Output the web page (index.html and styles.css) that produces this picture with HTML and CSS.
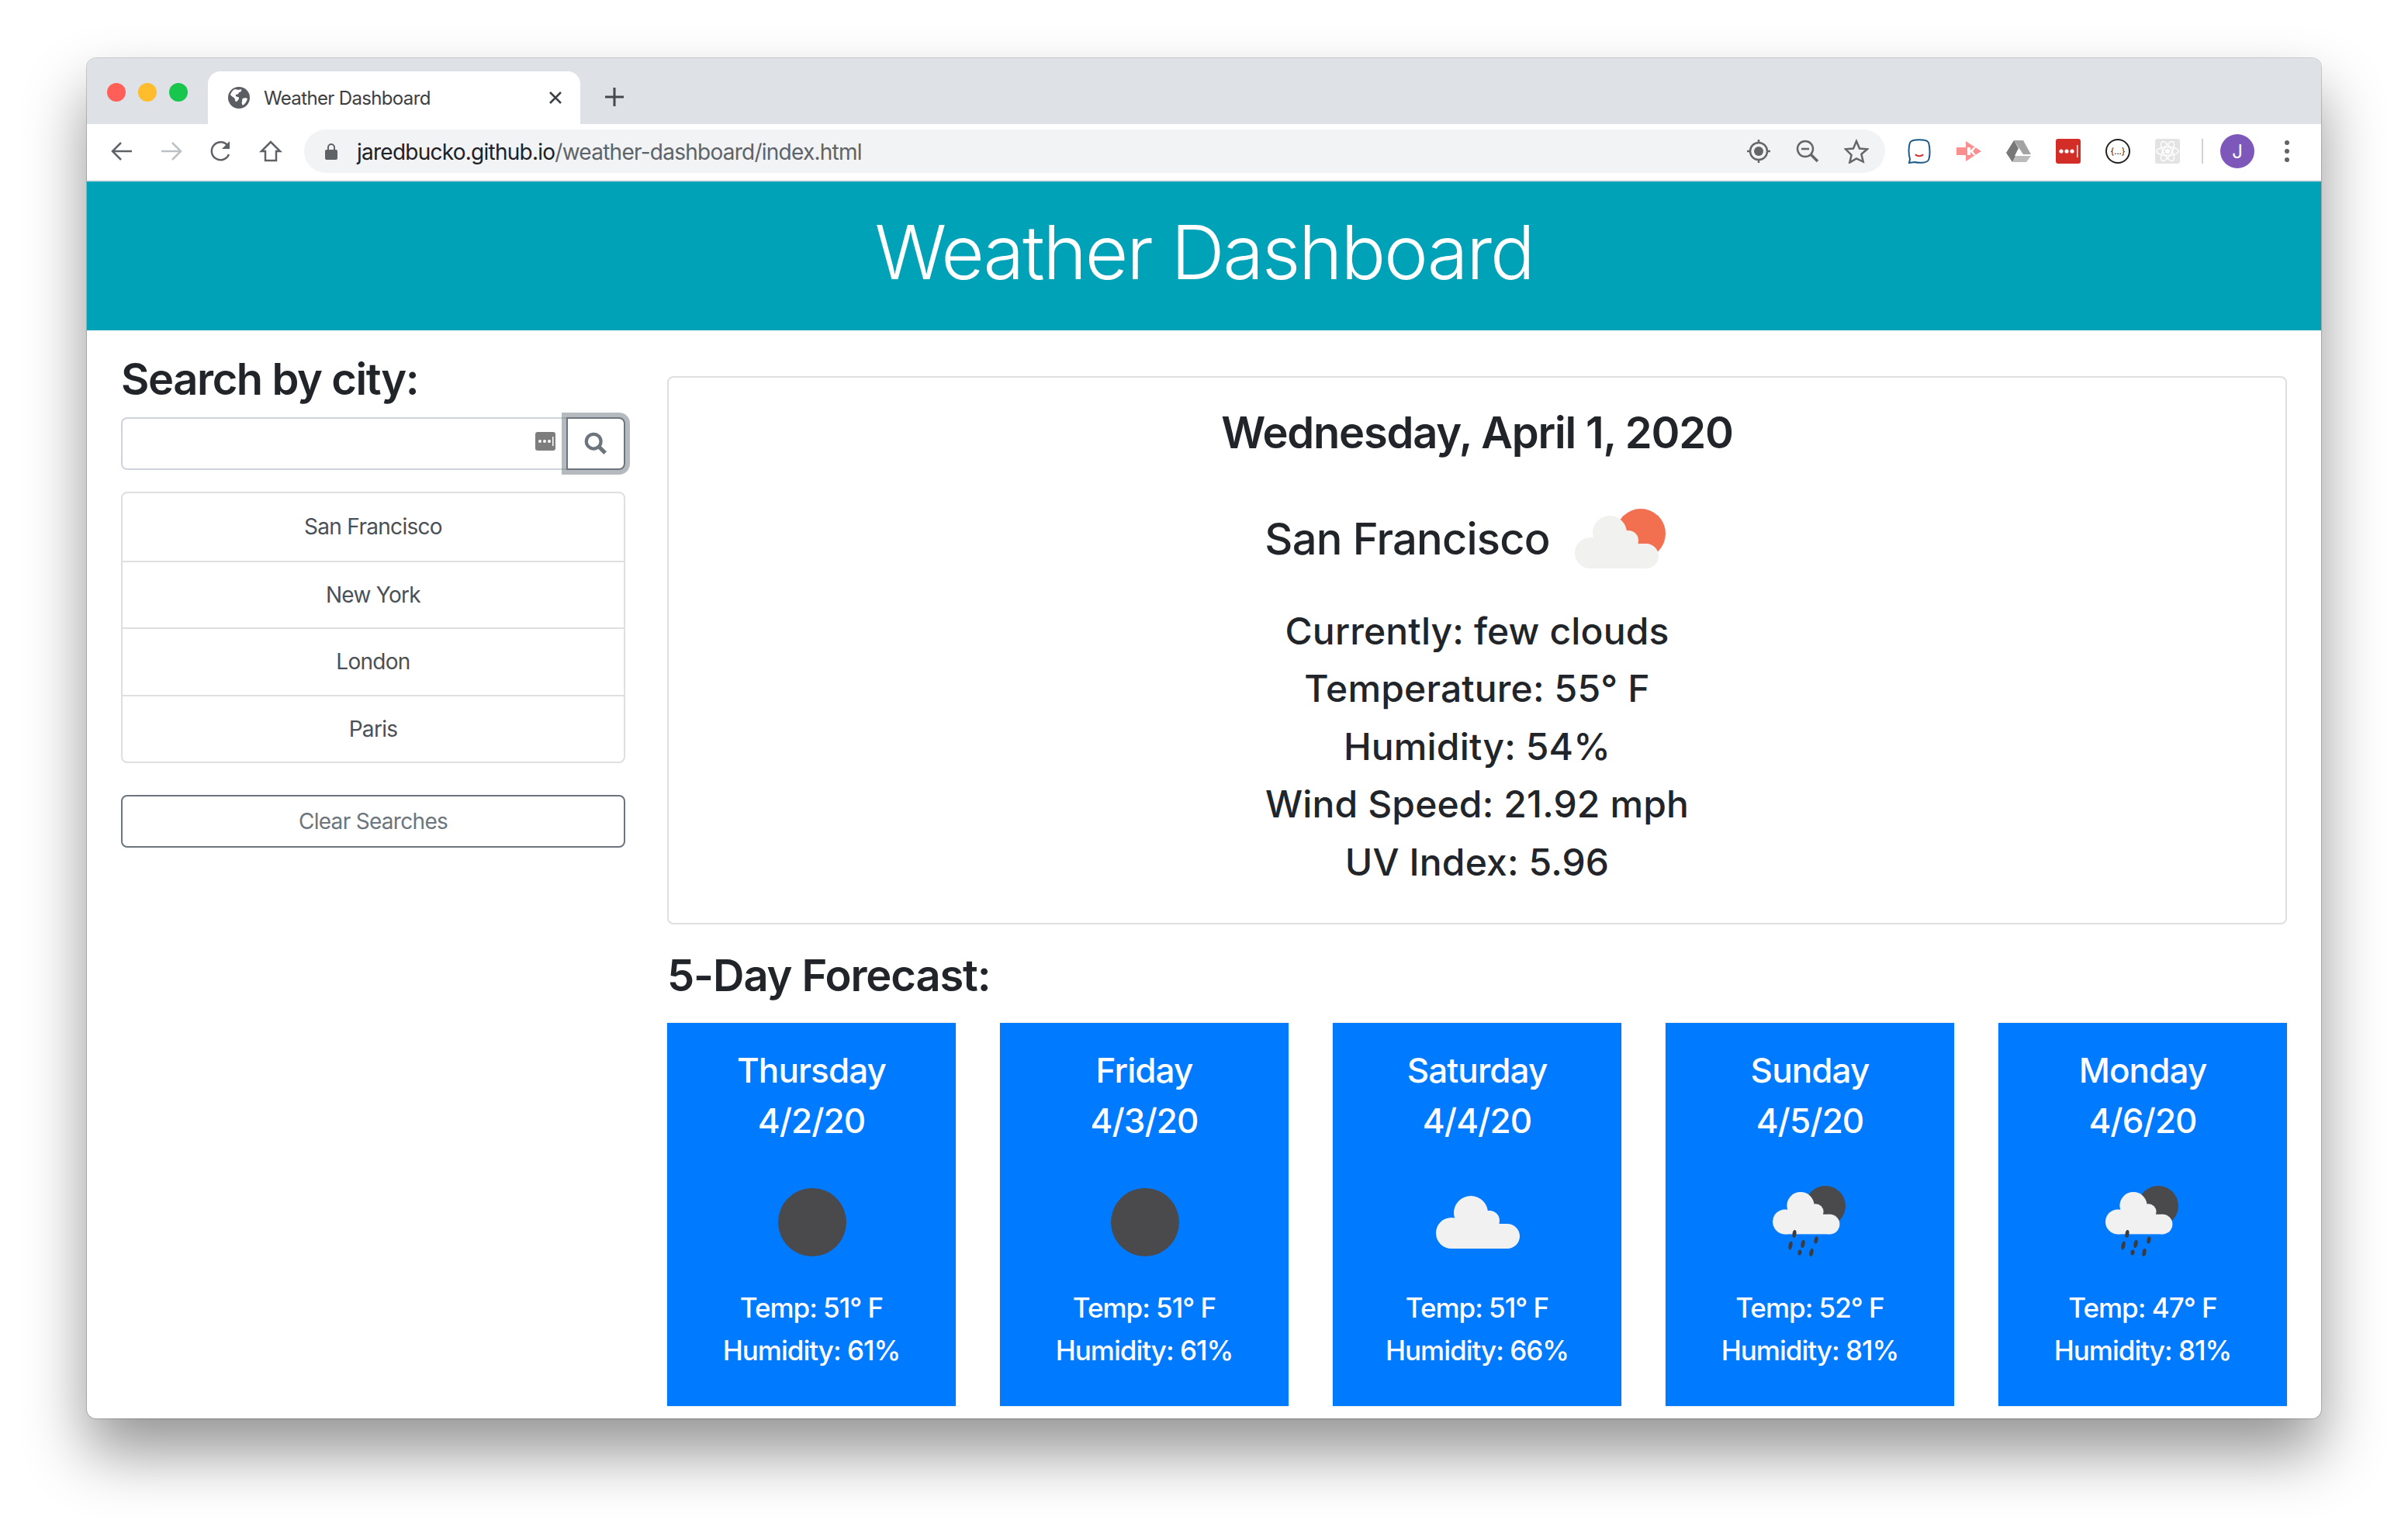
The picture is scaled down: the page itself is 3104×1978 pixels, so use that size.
FILE: index.html
```html
<!DOCTYPE html>
<html lang="en">
<head>
    <meta charset="UTF-8">
    <title>Weather Dashboard</title>
    <link rel="stylesheet" href="styles.css">
</head>
<body>
    <svg class="icon-defs" width="0" height="0">
        <defs>
            <g id="cloud">
                <circle cx="45" cy="22" r="22"/>
                <circle cx="20" cy="48" r="20"/>
                <circle cx="92" cy="52" r="16"/>
                <circle cx="69" cy="32" r="13"/>
                <rect x="20" y="36" width="72" height="32"/>
            </g>
            <g id="rain-icon">
                <circle cx="80" cy="39" r="26" fill="#4a4a4d"/>
                <use href="#cloud" transform="translate(12 21) scale(.8)" fill="#f1f1f1"/>
                <g fill="#3c3c40">
                    <ellipse cx="40" cy="75" rx="2.500" ry="5" transform="rotate(8 40 75)"/>
                    <ellipse cx="68" cy="83" rx="2.500" ry="4.500" transform="rotate(12 68 83)"/>
                    <ellipse cx="51" cy="88" rx="2.500" ry="5" transform="rotate(12 51 88)"/>
                    <ellipse cx="35" cy="90" rx="2.500" ry="5.500" transform="rotate(12 35 90)"/>
                    <ellipse cx="47" cy="99" rx="2.500" ry="3.500" transform="rotate(8 47 99)"/>
                    <ellipse cx="62" cy="99" rx="2.500" ry="5" transform="rotate(12 62 99)"/>
                </g>
            </g>
        </defs>
    </svg>

    <div class="window">
        <div class="tab-strip">
            <div class="lights">
                <span class="light red"></span>
                <span class="light yellow"></span>
                <span class="light green"></span>
            </div>
            <div class="tab">
                <svg class="favicon" viewBox="0 0 28 28">
                    <circle cx="14" cy="14" r="14" fill="#5a5e63"/>
                    <path d="M9 3c3 1 6 1 8 0 1 2-1 4-3 4 0 2-2 3-4 3-1 2 1 3 3 3 2 1 1 3-1 5-1 2-3 1-3-1 0-2-1-3-3-4-1-1-3-2-3-3 1-3 3-6 6-7zM19 15c2-1 4-1 6 0-1 4-3 7-6 9-1-2-2-3-1-5 0-2 0-3 1-4z" fill="#fff"/>
                </svg>
                <span class="tab-title">Weather Dashboard</span>
                <svg class="tab-close" viewBox="0 0 20 20"><path d="M3 3l14 14M17 3L3 17"/></svg>
            </div>
            <svg class="new-tab" viewBox="0 0 26 26"><path d="M13 1v24M1 13h24"/></svg>
        </div>

        <div class="toolbar">
            <span class="slot"><svg class="tool" viewBox="0 0 32 32"><path d="M29 16H5M15 5L4 16l11 11"/></svg></span>
            <span class="slot"><svg class="tool faded" viewBox="0 0 32 32"><path d="M3 16h24M17 5l11 11-11 11"/></svg></span>
            <span class="slot"><svg class="tool" viewBox="0 0 32 32"><path d="M26 20a11.500 11.500 0 1 1-1-10.500"/><path class="solid" d="M27 3v10H17z"/></svg></span>
            <span class="slot"><svg class="tool" viewBox="0 0 32 32"><path d="M16 4L4 16h5v12h14V16h5z"/></svg></span>

            <div class="omnibox">
                <svg class="lock" viewBox="0 0 16 22"><path d="M4 9V6a4 4 0 0 1 8 0v3" fill="none" stroke="#5f6368" stroke-width="2"/><rect y="9" width="16" height="13" rx="2" fill="#5f6368"/></svg>
                <span class="url"><span class="url-host">jaredbucko.github.io</span>/weather-dashboard/index.html</span>
                <svg class="omni-icon" viewBox="0 0 32 32"><circle cx="16" cy="16" r="11" fill="none" stroke="#666" stroke-width="2.500"/><circle cx="16" cy="16" r="6" fill="#666"/><path d="M16 1v5M16 26v5M1 16h5M26 16h5" stroke="#666" stroke-width="2.500"/></svg>
                <svg class="omni-icon" viewBox="0 0 32 32"><circle cx="13" cy="13" r="10" fill="none" stroke="#666" stroke-width="2.500"/><path d="M8 13h10" stroke="#666" stroke-width="2.500"/><path d="M20 20l9 9" stroke="#666" stroke-width="3.500"/></svg>
                <svg class="omni-icon" viewBox="0 0 32 32"><path d="M16 3l4 9.500 10 .8-7.600 6.500 2.300 9.800L16 25.400l-8.700 5.200 2.300-9.800L2 13.300l10-.8z" fill="none" stroke="#666" stroke-width="2.500"/></svg>
            </div>

            <div class="extensions">
                <span class="slot"><svg class="ext" viewBox="0 0 32 32"><path d="M4 26C2 20 2 10 4 5c2-5 22-5 24 0 2 6 2 17 0 22-2 5-14 4-18 3l-7 1z" fill="#fff" stroke="#1c5a86" stroke-width="2"/><path d="M11 20c2 3 8 3 10 0" fill="none" stroke="#d0312d" stroke-width="2"/></svg></span>
                <span class="slot"><svg class="ext" viewBox="0 0 32 32"><path d="M12 3l20 13-20 13v-8H0V11h12z" fill="#fb8e8e"/><path d="M14 11h4v4l4-4h3l-4 5 4 5h-3l-4-4v4h-4z" fill="#fff"/></svg></span>
                <span class="slot"><svg class="ext" viewBox="0 0 32 32"><path d="M10 2h12l10 18H22z" fill="#a3a3a3"/><path d="M10 2L0 18l8 12 9-16z" fill="#777"/><path d="M8 30l5-8h19l-6 8z" fill="#bbb"/><path d="M16 12l5 10H11z" fill="#fff"/></svg></span>
                <span class="slot"><svg class="ext" viewBox="0 0 32 32"><rect width="32" height="32" rx="3" fill="#d32d27"/><circle cx="7" cy="16" r="2.600" fill="#fff"/><circle cx="14" cy="16" r="2.600" fill="#fff"/><circle cx="21" cy="16" r="2.600" fill="#fff"/><rect x="27" y="8" width="1.500" height="16" fill="#fff"/></svg></span>
                <span class="slot"><svg class="ext" viewBox="0 0 32 32"><circle cx="16" cy="16" r="15" fill="#fff" stroke="#222" stroke-width="2"/><text x="16" y="20" text-anchor="middle" class="json-text">{...}</text></svg></span>
                <span class="slot"><svg class="ext" viewBox="0 0 32 32"><rect width="32" height="32" rx="3" fill="#e3e3e3"/><g fill="none" stroke="#fff" stroke-width="1.500"><ellipse cx="16" cy="16" rx="14" ry="5.500"/><ellipse cx="16" cy="16" rx="14" ry="5.500" transform="rotate(60 16 16)"/><ellipse cx="16" cy="16" rx="14" ry="5.500" transform="rotate(120 16 16)"/></g><circle cx="16" cy="16" r="3" fill="#fff"/></svg></span>
            </div>
            <span class="separator"></span>
            <span class="slot"><span class="avatar">J</span></span>
            <span class="slot"><svg class="menu-dots" viewBox="0 0 6 30"><circle cx="3" cy="4" r="3"/><circle cx="3" cy="15" r="3"/><circle cx="3" cy="26" r="3"/></svg></span>
        </div>

        <header class="page-header">
            <h1>Weather Dashboard</h1>
        </header>

        <div class="content">
            <aside class="sidebar">
                <h3>Search by city:</h3>
                <div class="search-group">
                    <div class="search-input">
                        <svg class="lp-fill" viewBox="0 0 26 24"><rect width="26" height="24" rx="3" fill="#7d7d7d"/><circle cx="6" cy="12" r="2" fill="#fff"/><circle cx="12" cy="12" r="2" fill="#fff"/><circle cx="18" cy="12" r="2" fill="#fff"/><rect x="22" y="6" width="1.500" height="12" fill="#fff"/></svg>
                    </div>
                    <button class="search-btn">
                        <svg viewBox="0 0 32 32"><circle cx="13" cy="13" r="10" fill="none" stroke="#6c757d" stroke-width="4.500"/><path d="M20 20l9 9" stroke="#6c757d" stroke-width="5.500"/></svg>
                    </button>
                </div>
                <ul class="city-list">
                    <li>San Francisco</li>
                    <li>New York</li>
                    <li>London</li>
                    <li>Paris</li>
                </ul>
                <button class="clear-btn">Clear Searches</button>
            </aside>

            <main class="main">
                <section class="current">
                    <h3 class="current-date">Wednesday, April 1, 2020</h3>
                    <div class="city-row">
                        <h3>San Francisco</h3>
                        <svg class="city-icon" viewBox="0 0 160 120">
                            <circle cx="97" cy="53" r="32" fill="#f2704f"/>
                            <use href="#cloud" transform="translate(12 30)" fill="#f1f1f0"/>
                        </svg>
                    </div>
                    <p>Currently: few clouds</p>
                    <p>Temperature: 55° F</p>
                    <p>Humidity: 54%</p>
                    <p>Wind Speed: 21.92 mph</p>
                    <p>UV Index: 5.96</p>
                </section>

                <h3 class="forecast-title">5-Day Forecast:</h3>
                <div class="forecast">
                    <div class="day-card">
                        <h5>Thursday</h5>
                        <h5>4/2/20</h5>
                        <svg class="day-icon" viewBox="0 0 120 120"><circle cx="61" cy="60" r="44" fill="#4a4a4d"/></svg>
                        <p>Temp: 51° F</p>
                        <p>Humidity: 61%</p>
                    </div>
                    <div class="day-card">
                        <h5>Friday</h5>
                        <h5>4/3/20</h5>
                        <svg class="day-icon" viewBox="0 0 120 120"><circle cx="61" cy="60" r="44" fill="#4a4a4d"/></svg>
                        <p>Temp: 51° F</p>
                        <p>Humidity: 61%</p>
                    </div>
                    <div class="day-card">
                        <h5>Saturday</h5>
                        <h5>4/4/20</h5>
                        <svg class="day-icon" viewBox="0 0 120 120"><use href="#cloud" transform="translate(7 26)" fill="#f1f1f1"/></svg>
                        <p>Temp: 51° F</p>
                        <p>Humidity: 66%</p>
                    </div>
                    <div class="day-card">
                        <h5>Sunday</h5>
                        <h5>4/5/20</h5>
                        <svg class="day-icon" viewBox="0 0 120 120"><use href="#rain-icon"/></svg>
                        <p>Temp: 52° F</p>
                        <p>Humidity: 81%</p>
                    </div>
                    <div class="day-card">
                        <h5>Monday</h5>
                        <h5>4/6/20</h5>
                        <svg class="day-icon" viewBox="0 0 120 120"><use href="#rain-icon"/></svg>
                        <p>Temp: 47° F</p>
                        <p>Humidity: 81%</p>
                    </div>
                </div>
            </main>
        </div>
    </div>
</body>
</html>
```

FILE: styles.css
```css
* {
    box-sizing: border-box;
}
html, body {
    height: 100%;
}
body {
    margin: 0;
    padding: 75px 0 0 112px;
    background-color: #ffffff;
    font-family: Inter, "Liberation Sans", sans-serif;
    color: #212529;
    overflow: hidden;
}
.icon-defs {
    position: absolute;
}
h1, h3, h5, p, ul {
    margin: 0;
    padding: 0;
}

/* browser chrome */
.window {
    width: 2880px;
    height: 1754px;
    background-color: #ffffff;
    border-radius: 12px;
    overflow: hidden;
    box-shadow: 0 0 0 1px rgba(0, 0, 0, 0.18), 0 44px 80px rgba(0, 0, 0, 0.42);
}
.tab-strip {
    height: 85px;
    background-color: #dee1e6;
    display: flex;
    align-items: flex-end;
    padding-left: 26px;
}
.lights {
    display: flex;
    gap: 16px;
    align-self: flex-start;
    margin-top: 32px;
    width: 130px;
}
.light {
    width: 24px;
    height: 24px;
    border-radius: 50%;
}
.light.red {
    background-color: #ff5f57;
}
.light.yellow {
    background-color: #ffbd2e;
}
.light.green {
    background-color: #18c64d;
}
.tab {
    width: 480px;
    height: 68px;
    background-color: #ffffff;
    border-radius: 16px 16px 0 0;
    display: flex;
    align-items: center;
    padding: 0 22px 0 26px;
}
.favicon {
    width: 28px;
    height: 28px;
}
.tab-title {
    margin-left: 18px;
    font-size: 24px;
    letter-spacing: -0.65px;
    color: #3c4043;
    flex: 1;
}
.tab-close {
    width: 20px;
    height: 20px;
    fill: none;
    stroke: #3c4043;
    stroke-width: 2.5;
}
.new-tab {
    width: 26px;
    height: 26px;
    margin: 0 0 22px 31px;
    fill: none;
    stroke: #45484c;
    stroke-width: 3;
}
.toolbar {
    height: 74px;
    padding: 0 0 2px 13px;
    background-color: #ffffff;
    border-bottom: 2px solid #dee1e6;
    display: flex;
    align-items: center;
}
.slot {
    width: 64px;
    display: flex;
    justify-content: center;
    align-items: center;
}
.tool {
    width: 32px;
    height: 32px;
    fill: none;
    stroke: #5f6368;
    stroke-width: 2.5;
}
.tool.faded {
    stroke: #bdc1c6;
}
.tool .solid {
    fill: #5f6368;
    stroke: none;
}
.omnibox {
    width: 2038px;
    height: 56px;
    margin-left: 11px;
    padding: 0 21px 0 27px;
    background-color: #f1f3f4;
    border-radius: 28px;
    display: flex;
    align-items: center;
}
.lock {
    width: 16px;
    height: 22px;
}
.url {
    margin-left: 25px;
    padding-top: 2px;
    flex: 1;
    font-size: 28px;
    letter-spacing: -0.75px;
    color: #5f6368;
}
.url-host {
    color: #202124;
}
.omni-icon {
    width: 32px;
    height: 32px;
    margin-left: 31px;
}
.extensions {
    display: flex;
    margin-left: 12px;
}
.ext {
    height: 32px;
    width: 32px;
}
.json-text {
    font-size: 11px;
    fill: #111111;
}
.separator {
    width: 2px;
    height: 32px;
    margin: 0 12px;
    background-color: #cfd1d4;
}
.avatar {
    width: 44px;
    height: 44px;
    border-radius: 50%;
    background-color: #7e57bb;
    color: #ffffff;
    font-size: 24px;
    display: flex;
    justify-content: center;
    align-items: center;
}
.menu-dots {
    width: 6px;
    height: 30px;
    fill: #5f6368;
}

/* page */
.page-header {
    height: 192px;
    padding-bottom: 10px;
    background-color: #00a2b8;
    display: flex;
    justify-content: center;
    align-items: center;
}
.page-header h1 {
    font-size: 96px;
    font-weight: 300;
    color: #ffffff;
    letter-spacing: -2.2px;
}
.content {
    display: grid;
    grid-template-columns: 650px 2088px;
    column-gap: 54px;
    padding-left: 44px;
}
h3 {
    font-size: 56px;
    font-weight: 500;
    line-height: 67px;
    letter-spacing: -0.8px;
}
.sidebar {
    padding-top: 30px;
}
.sidebar h3 {
    margin-bottom: 15px;
    font-weight: 600;
    letter-spacing: -1.4px;
}
.search-group {
    display: flex;
    height: 68px;
}
.search-input {
    flex: 1;
    border: 2px solid #ced4da;
    border-right: none;
    border-radius: 8px 0 0 8px;
    display: flex;
    justify-content: flex-end;
    align-items: center;
    padding: 0 14px 6px 0;
}
.lp-fill {
    width: 26px;
    height: 24px;
}
.search-btn {
    width: 76px;
    background-color: #ffffff;
    border: 2px solid #6c757d;
    border-radius: 0 8px 8px 0;
    box-shadow: 0 0 0 6px rgba(108, 117, 125, 0.5);
    display: flex;
    justify-content: center;
    align-items: center;
    padding: 0;
}
.search-btn svg {
    width: 30px;
    height: 30px;
}
.city-list {
    margin-top: 28px;
    list-style: none;
    border: 2px solid #dfdfdf;
    border-radius: 8px;
}
.city-list li {
    height: 86.5px;
    font-size: 28px;
    letter-spacing: -0.7px;
    color: #495057;
    display: flex;
    justify-content: center;
    align-items: center;
}
.city-list li + li {
    border-top: 2px solid #dfdfdf;
}
.clear-btn {
    display: block;
    width: 100%;
    height: 68px;
    margin-top: 41px;
    background-color: #ffffff;
    border: 2px solid #6c757d;
    border-radius: 8px;
    font-family: inherit;
    font-size: 28px;
    letter-spacing: -0.7px;
    color: #6c757d;
}
.main {
    padding-top: 59px;
}
.current {
    height: 707px;
    padding-top: 38px;
    border: 2px solid #dfdfdf;
    border-radius: 8px;
    text-align: center;
}
.current-date {
    font-weight: 600;
    letter-spacing: -1.2px;
}
.city-row {
    display: flex;
    justify-content: center;
    align-items: center;
    height: 120px;
    margin: 43px 0 22px;
}
.city-icon {
    width: 160px;
    height: 120px;
    margin-left: 20px;
}
.current p {
    font-size: 48px;
    font-weight: 500;
    line-height: 74.4px;
    letter-spacing: 0.15px;
}
.forecast-title {
    margin-top: 33px;
    font-weight: 600;
    letter-spacing: -1.1px;
}
.forecast {
    display: grid;
    grid-template-columns: repeat(5, 372px);
    column-gap: 57px;
    margin-top: 27px;
}
.day-card {
    height: 494px;
    padding-top: 29px;
    background-color: #007bff;
    color: #ffffff;
    text-align: center;
    box-shadow: 0 0 2px rgba(0, 0, 0, 0.2);
}
.day-card h5 {
    font-size: 44px;
    font-weight: 500;
    line-height: 65px;
    letter-spacing: -0.9px;
}
.day-icon {
    display: block;
    width: 120px;
    height: 120px;
    margin: 38px auto 23px;
}
.day-card p {
    font-size: 35px;
    font-weight: 500;
    line-height: 55px;
    letter-spacing: -1px;
}
```
